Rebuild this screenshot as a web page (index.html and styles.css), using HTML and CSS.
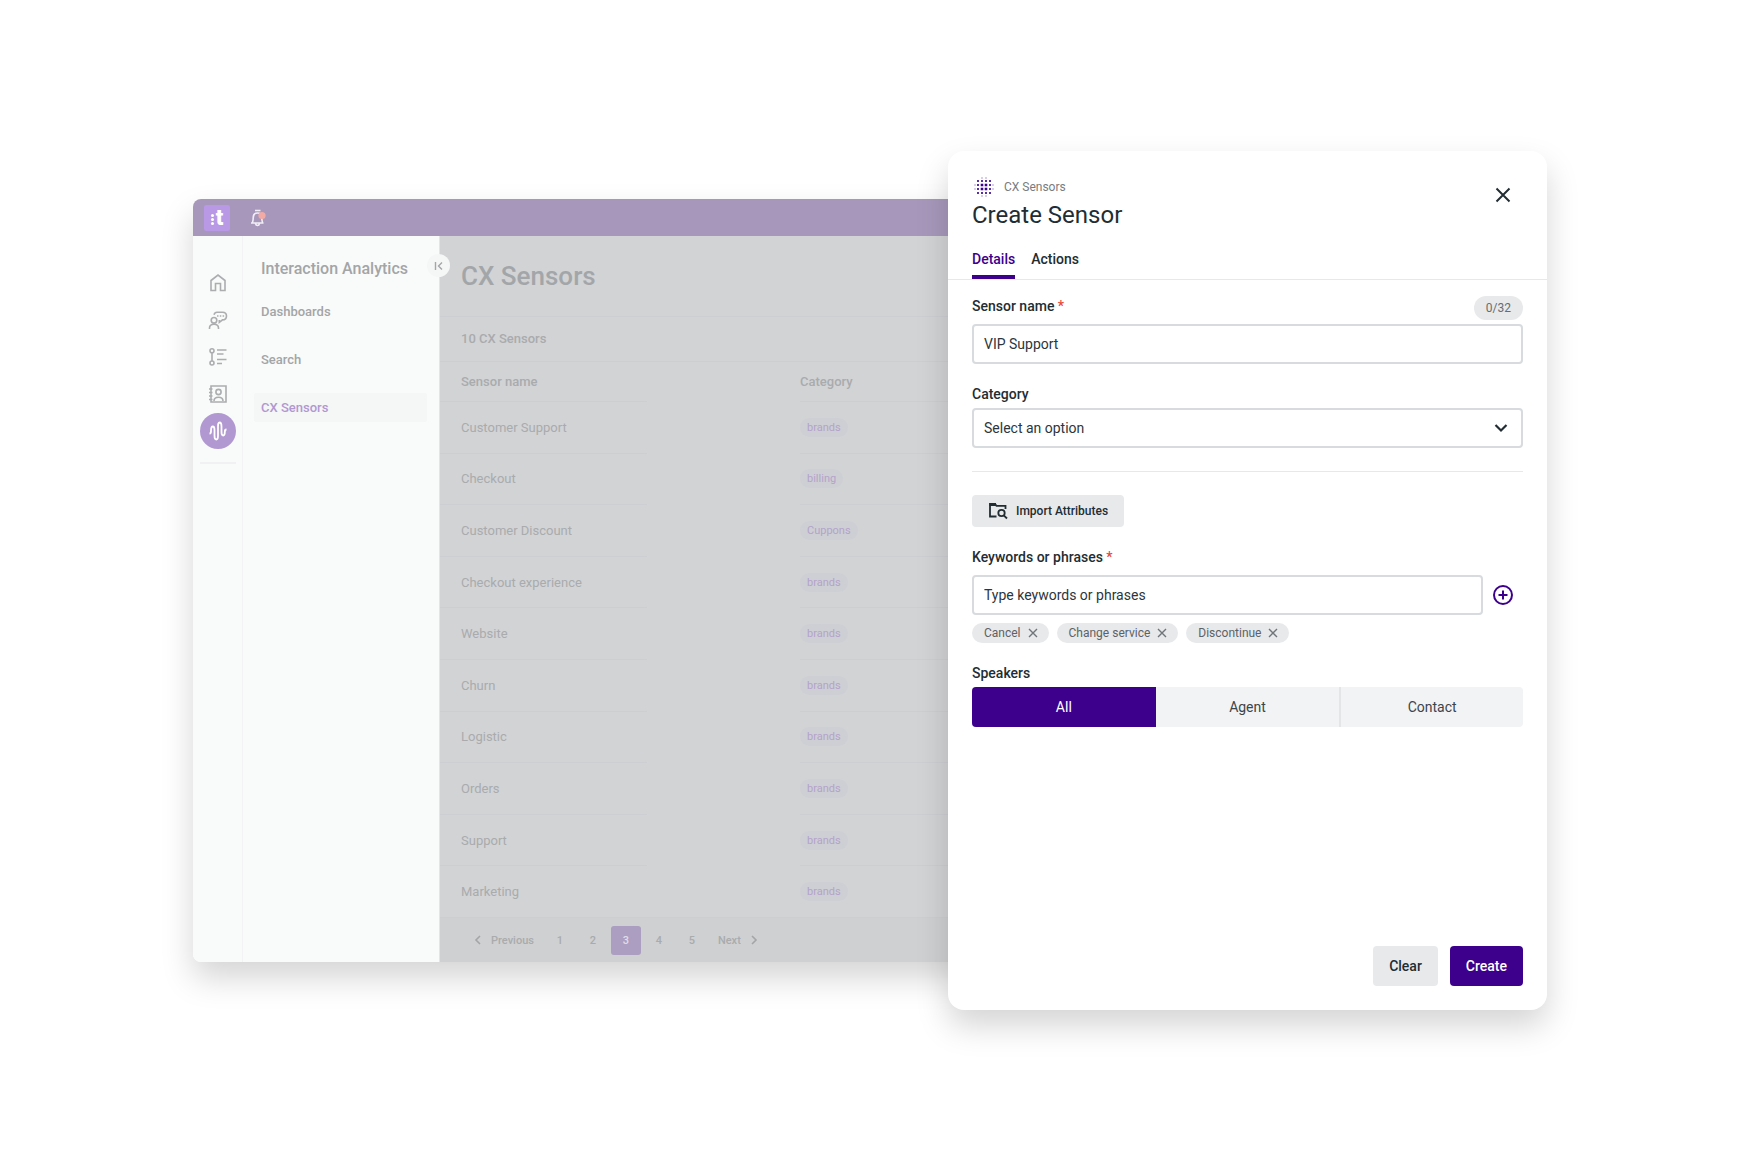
FILE: index.html
```html
<!DOCTYPE html>
<html lang="en">
<head>
  <meta charset="UTF-8" />
  <meta name="viewport" content="width=device-width, initial-scale=1.0"/>
  <title>Create Sensor - CX Sensors</title>
  <link rel="stylesheet" href="styles.css">
</head>
<body>
  <div class="stage">
    <div class="app">
      <header class="topbar">
        <a href="#" class="logo" aria-label="Home">
          <span class="logo-dots"><i></i><i></i><i></i></span>
          <span class="logo-letter">t</span>
        </a>
        <button type="button" class="bell" aria-label="Notifications">
          <svg width="20" height="20" viewBox="0 0 20 20" fill="none" stroke="#f1edf6" stroke-width="1.6">
            <path d="M7 2.500h5.500M3 15h12.500M4.500 15c0-1.500 .7-2 .7-5 0-3.500 1.500-5 4.300-5s4.300 1.500 4.300 5c0 3 .7 3.500 .7 5M7.500 15.500c.3 1.500 1 2 2 2s1.700-.5 2-2"/>
            <circle cx="14" cy="7.500" r="3.600" fill="#f2aaa4" stroke="none"/>
          </svg>
        </button>
      </header>

      <div class="app-body">
        <nav class="rail" aria-label="Main">
          <a href="#" aria-label="Home">
            <svg width="20" height="20" viewBox="0 0 20 20"><path d="M3 7.500L10 2l7 5.500V17.500h-4.500v-7h-5v7H3z"/></svg>
          </a>
          <a href="#" aria-label="Conversations">
            <svg width="20" height="20" viewBox="0 0 20 20"><circle cx="6" cy="10.300" r="2.800"/><path d="M1.500 19v-1c0-2.500 2-3.700 4.500-3.700s4.500 1.200 4.500 3.700v1M6 4.800C6.500 3 7.500 2.200 9 2.200h5.500c2.500 0 4 1.600 4 3.800s-1.500 3.900-4 3.900l-3.200 2.500V10"/><path d="M9 6h1.500M11.800 6h1.500M14.600 6h1.500"/></svg>
          </a>
          <a href="#" aria-label="Flows">
            <svg width="20" height="20" viewBox="0 0 20 20"><circle cx="4" cy="3.800" r="2"/><circle cx="4" cy="16" r="2"/><path d="M4 5.800V14M9 3h9.500M9 7h6.500M9 12.500h9.500M9 16.500h5"/></svg>
          </a>
          <a href="#" aria-label="Contacts">
            <svg width="20" height="20" viewBox="0 0 20 20"><path d="M3 2h15v16H3zM1 5h3.500M1 8.500h3.500M1 12h3.500M1 15.500h3.500"/><circle cx="10.500" cy="8" r="2.600"/><path d="M6 17c0-2.500 2-3.800 4.500-3.800s4.500 1.300 4.500 3.800"/></svg>
          </a>
          <a href="#" class="active" aria-label="Interaction Analytics">
            <svg width="20" height="20" viewBox="0 0 20 20"><path d="M1.500 12.500c1.400 0 1.500-1 1.500-2.500 0-3 .3-4.500 1.900-4.500S6.500 7 6.500 9v5.500c0 2.500 .4 4 1.800 4s1.700-1.500 1.700-4v-9c0-2.500 .3-4 1.700-4s1.800 1.500 1.800 4V11c0 2 .3 3.500 1.700 3.500s1.600-1.500 1.600-3.500c0-1.500 .4-2.500 1.700-2.500"/></svg>
          </a>
          <hr>
        </nav>

        <nav class="sidebar" aria-label="Interaction Analytics">
          <h2>Interaction Analytics</h2>
          <a href="#">Dashboards</a>
          <a href="#">Search</a>
          <a href="#" class="active">CX Sensors</a>
          <button type="button" class="collapse" aria-label="Collapse menu">
            <svg width="10" height="10" viewBox="0 0 10 10" fill="none" stroke="#a3a5a7" stroke-width="1.400"><path d="M1.500 1v8M8 1.500L4.500 5 8 8.500"/></svg>
          </button>
        </nav>

        <main class="content">
          <div class="content-title"><h1>CX Sensors</h1></div>
          <div class="count">10 CX Sensors</div>
          <table class="sensors">
            <thead>
              <tr><th class="name">Sensor name</th><td class="gap"></td><th>Category</th></tr>
            </thead>
            <tbody>
              <tr><td>Customer Support</td><td class="gap"></td><td><span class="pill">brands</span></td></tr>
              <tr><td>Checkout</td><td class="gap"></td><td><span class="pill">billing</span></td></tr>
              <tr><td>Customer Discount</td><td class="gap"></td><td><span class="pill">Cuppons</span></td></tr>
              <tr><td>Checkout experience</td><td class="gap"></td><td><span class="pill">brands</span></td></tr>
              <tr><td>Website</td><td class="gap"></td><td><span class="pill">brands</span></td></tr>
              <tr><td>Churn</td><td class="gap"></td><td><span class="pill">brands</span></td></tr>
              <tr><td>Logistic</td><td class="gap"></td><td><span class="pill">brands</span></td></tr>
              <tr><td>Orders</td><td class="gap"></td><td><span class="pill">brands</span></td></tr>
              <tr><td>Support</td><td class="gap"></td><td><span class="pill">brands</span></td></tr>
              <tr><td>Marketing</td><td class="gap"></td><td><span class="pill">brands</span></td></tr>
            </tbody>
          </table>
          <nav class="pagination" aria-label="Pages">
            <a href="#" class="step">
              <svg width="8" height="10" viewBox="0 0 8 10"><path d="M6 1L2 5l4 4"/></svg>
              Previous
            </a>
            <a href="#">1</a>
            <a href="#">2</a>
            <a href="#" class="current">3</a>
            <a href="#">4</a>
            <a href="#">5</a>
            <a href="#" class="step">
              Next
              <svg width="8" height="10" viewBox="0 0 8 10"><path d="M2 1l4 4-4 4"/></svg>
            </a>
          </nav>
        </main>
      </div>
    </div>

    <form class="drawer">
      <div class="drawer-header">
        <div>
          <div class="crumb">
            <svg width="20" height="20" viewBox="0 0 20 20" fill="#5a2fa6">
              <path fill="#d9cdec" d="M7 0h2v2H7zM11 0h2v2h-2zM7 18h2v2H7zM11 18h2v2h-2zM0 7h2v2H0zM0 11h2v2H0zM18 7h2v2h-2zM18 11h2v2h-2z"/>
              <path d="M3 3h2v2H3zM7 3h2v2H7zM11 3h2v2h-2zM15 3h2v2h-2zM3 7h2v2H3zM15 7h2v2h-2zM3 11h2v2H3zM15 11h2v2h-2zM3 15h2v2H3zM7 15h2v2H7zM11 15h2v2h-2zM15 15h2v2h-2z"/>
              <path fill="#3d008d" d="M6.700 6.700h2.600v2.600H6.700zM10.700 6.700h2.600v2.600h-2.600zM6.700 10.700h2.600v2.600H6.700zM10.700 10.700h2.600v2.600h-2.600z"/>
            </svg>
            CX Sensors
          </div>
          <h2>Create Sensor</h2>
        </div>
        <button type="button" class="icon-btn close" aria-label="Close">
          <svg width="16" height="16" viewBox="0 0 16 16" fill="none" stroke="#222d33" stroke-width="2"><path d="M1.500 1.500l13 13M14.500 1.500l-13 13"/></svg>
        </button>
      </div>

      <div class="tabs" role="tablist">
        <button type="button" role="tab" class="active" aria-selected="true">Details</button>
        <button type="button" role="tab" aria-selected="false">Actions</button>
      </div>

      <div class="drawer-body">
        <div class="form-group">
          <div class="label-row">
            <label for="sensor-name">Sensor name <span class="required">*</span></label>
            <span class="counter">0/32</span>
          </div>
          <input type="text" id="sensor-name" class="field" value="VIP Support">
        </div>

        <div class="form-group">
          <label for="category">Category</label>
          <div class="select-wrap">
            <select id="category" class="field">
              <option>Select an option</option>
              <option>brands</option>
              <option>billing</option>
            </select>
            <svg width="14" height="10" viewBox="0 0 14 10" fill="none" stroke="#222d33" stroke-width="2.200"><path d="M1.500 2L7 7.500 12.500 2"/></svg>
          </div>
        </div>

        <hr class="divider">

        <button type="button" class="import-btn">
          <svg width="20" height="18" viewBox="0 0 20 18" fill="none" stroke="#222d33" stroke-width="1.800">
            <path d="M8.500 14.500H2V2h5l1.500 1.800H17.500V7"/>
            <path d="M1.500 2.500h6.500" stroke-width="3"/>
            <circle cx="13.500" cy="11" r="3.200"/>
            <path d="M15.800 13.300L19 16.500"/>
          </svg>
          Import Attributes
        </button>

        <div class="form-group">
          <div class="label-row">
            <label for="keywords">Keywords or phrases <span class="required">*</span></label>
          </div>
          <div class="keyword-row">
            <input type="text" id="keywords" class="field" placeholder="Type keywords or phrases">
            <button type="button" class="icon-btn add" aria-label="Add keyword">
              <svg width="22" height="22" viewBox="0 0 22 22" fill="none" stroke="#3d008d" stroke-width="2"><circle cx="11" cy="11" r="9"/><path d="M11 6.500v9M6.500 11h9"/></svg>
            </button>
          </div>
          <div class="chips">
            <span class="chip">Cancel <button type="button" aria-label="Remove Cancel"><svg width="10" height="10" viewBox="0 0 10 10"><path d="M1 1l8 8M9 1L1 9"/></svg></button></span>
            <span class="chip">Change service <button type="button" aria-label="Remove Change service"><svg width="10" height="10" viewBox="0 0 10 10"><path d="M1 1l8 8M9 1L1 9"/></svg></button></span>
            <span class="chip">Discontinue <button type="button" aria-label="Remove Discontinue"><svg width="10" height="10" viewBox="0 0 10 10"><path d="M1 1l8 8M9 1L1 9"/></svg></button></span>
          </div>
        </div>

        <fieldset class="form-group">
          <legend>Speakers</legend>
          <div class="segments">
            <label><input type="radio" name="speakers" checked>All</label>
            <label><input type="radio" name="speakers">Agent</label>
            <label><input type="radio" name="speakers">Contact</label>
          </div>
        </fieldset>
      </div>

      <div class="drawer-footer">
        <button type="reset" class="btn">Clear</button>
        <button type="submit" class="btn btn-primary">Create</button>
      </div>
    </form>
  </div>
</body>
</html>
```
FILE: styles.css
```css
* {
  box-sizing: border-box;
}

body {
  margin: 0;
  padding-top: 1px;
  font-family: Roboto, "Liberation Sans", sans-serif;
  font-size: 14px;
  color: #222d33;
  background: #fff;
  min-height: 100vh;
  display: flex;
  justify-content: center;
  align-items: center;
}

h1, h2 {
  margin: 0;
}

a {
  color: inherit;
  text-decoration: none;
}

button {
  font-family: inherit;
  border: none;
  padding: 0;
  background: none;
  color: inherit;
  cursor: pointer;
}

hr {
  border: none;
  margin: 0;
}

.stage {
  width: 100%;
  max-width: 1354px;
  display: grid;
  grid-template-columns: minmax(0, 1fr) 599px;
  align-items: center;
}

/* App window, faded out behind the drawer */
.app {
  grid-area: 1 / 1 / 2 / 3;
  margin-right: 48px;
  border-radius: 8px;
  overflow: hidden;
  box-shadow: 0 16px 32px rgba(0, 0, 0, 0.17);
}

.topbar {
  display: flex;
  align-items: center;
  gap: 18px;
  height: 37px;
  padding-left: 11px;
  background: #a798bb;
}

.logo {
  display: flex;
  justify-content: center;
  align-items: center;
  gap: 2px;
  width: 26px;
  height: 26px;
  border-radius: 2px;
  background: #b998e5;
  color: #fff;
}

.logo-dots {
  display: flex;
  flex-direction: column;
  gap: 1px;
  padding-top: 4px;
}

.logo-dots i {
  width: 3px;
  height: 3px;
  border-radius: 50%;
  background: #fff;
}

.logo-letter {
  font-size: 22px;
  line-height: 24px;
  font-weight: 900;
}

.bell,
.bell svg {
  display: block;
}

.app-body {
  display: flex;
  background: #f9fbfa;
  color: #a3a5a7;
}

.rail {
  display: flex;
  flex-direction: column;
  align-items: center;
  gap: 1px;
  width: 49px;
  padding-top: 29px;
}

.rail a {
  display: flex;
  justify-content: center;
  align-items: center;
  width: 36px;
  height: 36px;
  border-radius: 50%;
}

.rail svg {
  fill: none;
  stroke: #abadaf;
  stroke-width: 1.6;
}

.rail .active {
  background: #b198d1;
}

.rail .active svg {
  stroke: #fff;
  stroke-width: 1.8;
}

.rail hr {
  width: 36px;
  height: 2px;
  margin-top: 12px;
  background: #f1f1f3;
}

.sidebar {
  position: relative;
  display: flex;
  flex-direction: column;
  gap: 19px;
  width: 198px;
  padding: 21px 12px 0 11px;
  border-left: 1px solid #f3f3f5;
  border-right: 1px solid #e3e4e6;
}

.sidebar h2 {
  margin-bottom: -3px;
  padding-left: 7px;
  font-size: 16px;
  line-height: 24px;
  font-weight: 500;
  white-space: nowrap;
}

.sidebar a {
  padding-left: 7px;
  border-radius: 2px;
  font-size: 13px;
  line-height: 29px;
  font-weight: 500;
}

.sidebar .active {
  background: #f5f6f6;
  color: #b198d1;
}

.collapse {
  position: absolute;
  top: 18px;
  right: -11px;
  display: flex;
  justify-content: center;
  align-items: center;
  width: 23px;
  height: 23px;
  border-radius: 50%;
  background: #f5f6f6;
}

.content {
  flex: 1;
  background: #d2d3d5;
  color: #a9abad;
  font-size: 13px;
}

.content-title {
  display: flex;
  align-items: center;
  height: 81px;
  padding-left: 21px;
  border-bottom: 1px solid #cdced1;
}

.content-title h1 {
  font-size: 26px;
  line-height: 32px;
  font-weight: 500;
  color: #a3a6a9;
}

.count {
  padding-left: 21px;
  line-height: 44px;
  font-weight: 500;
  border-bottom: 1px solid #cdced1;
}

.sensors {
  width: 100%;
  height: 556px;
  table-layout: fixed;
  border-collapse: separate;
  border-spacing: 0;
}

.sensors th,
.sensors td {
  padding: 0;
  text-align: left;
  border-bottom: 1px solid #cdced1;
}

.sensors thead tr {
  height: 40px;
}

.sensors th {
  font-weight: 500;
}

.sensors tr :first-child {
  width: 207px;
  padding-left: 21px;
}

.sensors .gap {
  width: 153px;
  border-bottom-color: transparent;
}

.sensors tbody tr:last-child td {
  border-bottom-color: #cdced1;
}

.sensors tr .pill {
  display: inline-block;
  width: auto;
  padding: 0 7px;
  border-radius: 10px;
  font-size: 11px;
  line-height: 19px;
  background: #cecfd4;
  color: #b3a3ca;
  vertical-align: middle;
}

.pagination {
  display: flex;
  align-items: center;
  gap: 3px;
  height: 44px;
  padding-left: 34px;
  background: #cfd0d2;
  font-size: 11px;
  font-weight: 500;
}

.pagination a {
  width: 30px;
  line-height: 29px;
  border-radius: 3px;
  text-align: center;
}

.pagination .step {
  display: flex;
  align-items: center;
  gap: 9px;
  width: auto;
  margin-right: 8px;
}

.pagination .step:last-child {
  margin: 0 0 0 8px;
}

.pagination svg {
  fill: none;
  stroke: #a3a5a7;
  stroke-width: 1.6;
}

.pagination .current {
  background: #ab9ec0;
  color: #e0dce8;
}

/* Create sensor drawer */
.drawer {
  grid-area: 1 / 2 / 2 / 3;
  position: relative;
  display: flex;
  flex-direction: column;
  min-height: 859px;
  border-radius: 16px;
  background: #fff;
  box-shadow: 0 16px 32px rgba(0, 0, 0, 0.17);
}

.drawer-header {
  display: flex;
  justify-content: space-between;
  align-items: center;
  padding: 24px 32px 12px 24px;
}

.crumb {
  display: flex;
  align-items: center;
  gap: 10px;
  padding-left: 2px;
  font-size: 12px;
  line-height: 24px;
  color: #777c80;
}

.drawer-header h2 {
  font-size: 24px;
  line-height: 32px;
  font-weight: 400;
}

.icon-btn {
  display: flex;
  justify-content: center;
  align-items: center;
  width: 24px;
  height: 24px;
}

.close {
  margin-bottom: 16px;
}

.tabs {
  display: flex;
  gap: 16px;
  padding: 0 24px;
  border-bottom: 1px solid #e7e8ea;
}

.tabs button {
  padding: 8px 0;
  border-bottom: 4px solid transparent;
  font-size: 14px;
  line-height: 16px;
  font-weight: 500;
}

.tabs .active {
  border-bottom-color: #3d008d;
  color: #3d008d;
}

.drawer-body {
  flex: 1;
  display: flex;
  flex-direction: column;
  align-items: flex-start;
  gap: 20px;
  padding: 16px 24px 0;
}

.form-group {
  display: flex;
  flex-direction: column;
  gap: 4px;
  width: 100%;
  margin: 0;
  padding: 0;
  border: none;
}

.form-group label,
.form-group legend {
  padding: 0;
  font-size: 14px;
  line-height: 20px;
  font-weight: 500;
}

.form-group legend {
  margin-bottom: 4px;
}

.label-row {
  display: flex;
  justify-content: space-between;
  height: 24px;
}

.required {
  color: #e5483d;
}

.counter {
  padding: 0 12px;
  border-radius: 12px;
  background: #e8e9eb;
  color: #666c70;
  font-size: 12px;
  line-height: 24px;
}

.field {
  width: 100%;
  height: 40px;
  padding: 0 10px;
  border: 2px solid #d7dbde;
  border-radius: 4px;
  background: #fff;
  color: #2c363c;
  font-family: inherit;
  font-size: 14px;
}

.field::placeholder {
  color: #2c363c;
  opacity: 1;
}

.field:focus {
  outline: none;
  border-color: #3d008d;
}

.select-wrap {
  position: relative;
}

.select-wrap select {
  display: block;
  appearance: none;
}

.select-wrap svg {
  position: absolute;
  top: 15px;
  right: 15px;
  pointer-events: none;
}

.divider {
  width: 100%;
  height: 1px;
  margin: 3px 0;
  background: #e7e8ea;
}

.import-btn {
  display: flex;
  align-items: center;
  gap: 8px;
  height: 32px;
  padding: 0 16px;
  border-radius: 4px;
  background: #e8e9eb;
  font-size: 12px;
  font-weight: 500;
}

.keyword-row {
  display: flex;
  align-items: center;
}

.keyword-row .add {
  flex: none;
  width: 40px;
}

.chips {
  display: flex;
  gap: 8px;
  margin-top: 4px;
}

.chip {
  display: flex;
  align-items: center;
  gap: 7px;
  padding: 0 11px 0 12px;
  border-radius: 10px;
  background: #e8e9eb;
  color: #5c6266;
  font-size: 12px;
  line-height: 20px;
}

.chip svg {
  display: block;
  fill: none;
  stroke: #6f7579;
  stroke-width: 1.4;
}

.segments {
  display: grid;
  grid-template-columns: repeat(3, 1fr);
  border-radius: 4px;
  overflow: hidden;
  background: #f2f3f5;
}

.segments label {
  position: relative;
  line-height: 40px;
  font-weight: 400;
  text-align: center;
  color: #3c454b;
  cursor: pointer;
}

.segments label + label {
  border-left: 2px solid #e3e5e7;
}

.segments label:has(input:checked) {
  background: #3d008d;
  color: #fff;
}

.segments label:has(input:checked) + label {
  border-left: none;
}

.segments input {
  position: absolute;
  inset: 0;
  margin: 0;
  appearance: none;
  cursor: pointer;
}

.drawer-footer {
  display: flex;
  justify-content: flex-end;
  gap: 12px;
  padding: 24px;
}

.btn {
  height: 40px;
  padding: 0 16px;
  border-radius: 4px;
  background: #e8e9eb;
  font-size: 14px;
  font-weight: 500;
}

.btn-primary {
  background: #3d008d;
  color: #fff;
}
```
